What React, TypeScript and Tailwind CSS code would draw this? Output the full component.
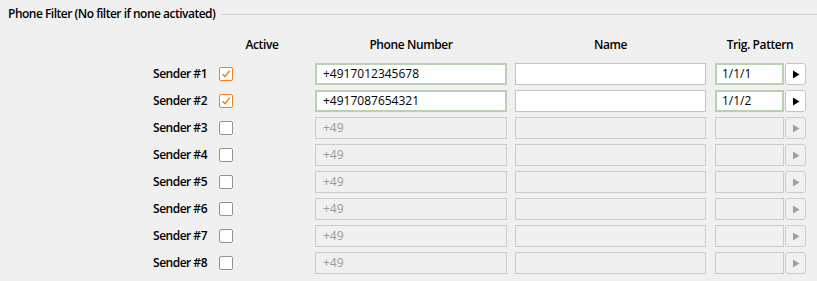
const senders = [
  { id: 1, active: true, phone: "+4917012345678", name: "", pattern: "1/1/1" },
  { id: 2, active: true, phone: "+4917087654321", name: "", pattern: "1/1/2" },
  { id: 3, active: false, phone: "+49", name: "", pattern: "" },
  { id: 4, active: false, phone: "+49", name: "", pattern: "" },
  { id: 5, active: false, phone: "+49", name: "", pattern: "" },
  { id: 6, active: false, phone: "+49", name: "", pattern: "" },
  { id: 7, active: false, phone: "+49", name: "", pattern: "" },
  { id: 8, active: false, phone: "+49", name: "", pattern: "" },
];

function Check({ on }: { on: boolean }) {
  return on ? (
    <div className="flex h-[14px] w-[14px] items-center justify-center rounded-[2px] border border-[#f0821e] bg-white">
      <svg width="10" height="10" viewBox="0 0 10 10">
        <path d="M1.5 5.2 L4 7.6 L8.6 1.8" fill="none" stroke="#f0821e" strokeWidth="1.5" />
      </svg>
    </div>
  ) : (
    <div className="h-[14px] w-[14px] rounded-[2px] border border-[#939393] bg-white" />
  );
}

export default function App() {
  return (
    <div
      className="h-[281px] w-[817px] overflow-hidden bg-[#f0f0f0] text-[12px] text-black"
      style={{ fontFamily: '"Open Sans", "Noto Sans", sans-serif' }}
    >
      <div className="flex h-[28px] items-center pl-[8px]">
        <span className="font-semibold tracking-[-0.5px]">
          Phone Filter (No filter if none activated)
        </span>
        <div className="ml-[6px] flex-1 border-t border-[#d0d0d0]" />
      </div>

      <div className="mt-[7px] flex h-[20px] items-center font-semibold tracking-[-0.4px]">
        <div className="w-[219px]" />
        <div className="w-[86px] text-center">Active</div>
        <div className="ml-[10px] w-[192px] text-center">Phone Number</div>
        <div className="ml-[8px] w-[191px] text-center">Name</div>
        <div className="ml-[9px] w-[90px] text-center">Trig. Pattern</div>
      </div>

      <div className="mt-[8px] flex flex-col gap-[5px]">
        {senders.map((s) => (
          <div key={s.id} className="flex h-[22px] items-center">
            <div className="w-[207px] text-right font-semibold tracking-[-0.5px]">
              Sender #{s.id}
            </div>
            <div className="ml-[12px] w-[96px]">
              <Check on={s.active} />
            </div>
            <div
              className={
                s.active
                  ? "flex h-[22px] w-[192px] items-center border-2 border-[#b9d0b1] bg-white pl-[6px]"
                  : "flex h-[22px] w-[192px] items-center border border-[#cccccc] bg-[#f0f0f0] pl-[7px] text-[#9a9a9a]"
              }
            >
              {s.phone}
            </div>
            <div
              className={
                s.active
                  ? "ml-[8px] h-[22px] w-[191px] border border-[#c4c4c4] bg-white"
                  : "ml-[8px] h-[22px] w-[191px] border border-[#cccccc] bg-[#f0f0f0]"
              }
            >
              {s.name}
            </div>
            <div
              className={
                s.active
                  ? "ml-[9px] flex h-[22px] w-[69px] items-center border-2 border-[#b9d0b1] bg-white pl-[5px]"
                  : "ml-[9px] h-[22px] w-[69px] border border-[#cccccc] bg-[#f0f0f0]"
              }
            >
              {s.pattern}
            </div>
            <div
              className={
                s.active
                  ? "ml-[1px] flex h-[22px] w-[21px] items-center justify-center rounded-[3px] border border-[#c4c4c4] bg-white"
                  : "ml-[1px] flex h-[22px] w-[21px] items-center justify-center rounded-[3px] border border-[#cccccc] bg-[#f0f0f0]"
              }
            >
              <svg width="8" height="9" viewBox="0 0 8 9">
                <path d="M1 0.5 L7.5 4.5 L1 8.5 Z" fill={s.active ? "#000" : "#a0a0a0"} />
              </svg>
            </div>
          </div>
        ))}
      </div>
    </div>
  );
}
